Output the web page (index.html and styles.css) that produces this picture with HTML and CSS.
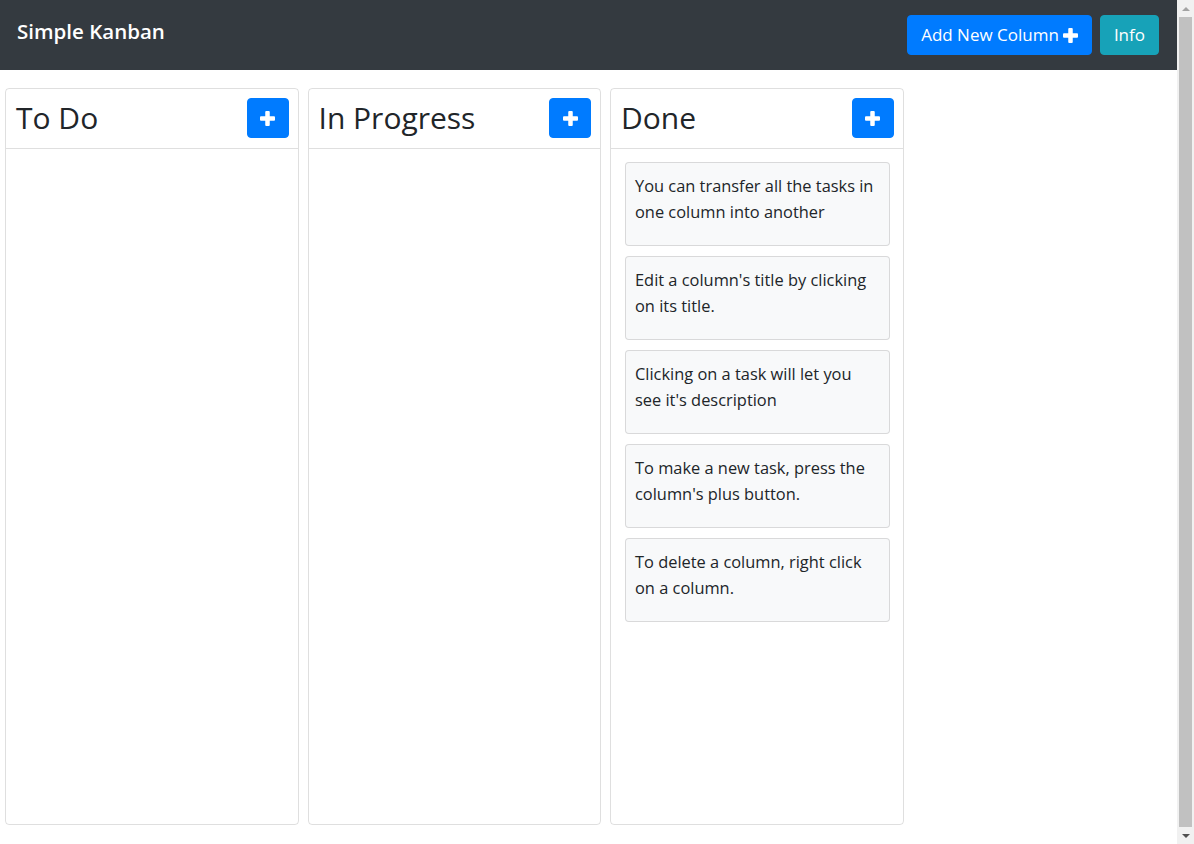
FILE: index.html
```html
<!DOCTYPE html>
<html lang="en">
<head>
<meta charset="utf-8">
<title>Simple Kanban</title>
<link rel="stylesheet" href="styles.css">
</head>
<body>
<div class="page">
  <nav class="navbar">
    <div class="brand">Simple Kanban</div>
    <div class="nav-actions">
      <button class="btn btn-primary btn-add-col">Add New Column <svg class="plus-icon" viewBox="0 0 15 15" width="15" height="15"><rect x="5.25" y="0" width="4.5" height="15" rx="1" fill="#fff"/><rect x="0" y="5.25" width="15" height="4.5" rx="1" fill="#fff"/></svg></button>
      <button class="btn btn-info">Info</button>
    </div>
  </nav>
  <main class="board">
    <section class="column">
      <header class="column-header">
        <h2 class="column-title">To Do</h2>
        <button class="btn btn-primary btn-plus"><svg viewBox="0 0 15 15" width="15" height="15"><rect x="5.25" y="0" width="4.5" height="15" rx="1" fill="#fff"/><rect x="0" y="5.25" width="15" height="4.5" rx="1" fill="#fff"/></svg></button>
      </header>
      <div class="column-body"></div>
    </section>
    <section class="column">
      <header class="column-header">
        <h2 class="column-title">In Progress</h2>
        <button class="btn btn-primary btn-plus"><svg viewBox="0 0 15 15" width="15" height="15"><rect x="5.25" y="0" width="4.5" height="15" rx="1" fill="#fff"/><rect x="0" y="5.25" width="15" height="4.5" rx="1" fill="#fff"/></svg></button>
      </header>
      <div class="column-body"></div>
    </section>
    <section class="column">
      <header class="column-header">
        <h2 class="column-title">Done</h2>
        <button class="btn btn-primary btn-plus"><svg viewBox="0 0 15 15" width="15" height="15"><rect x="5.25" y="0" width="4.5" height="15" rx="1" fill="#fff"/><rect x="0" y="5.25" width="15" height="4.5" rx="1" fill="#fff"/></svg></button>
      </header>
      <div class="column-body">
        <div class="task">You can transfer all the tasks in one column into another</div>
        <div class="task">Edit a column's title by clicking on its title.</div>
        <div class="task">Clicking on a task will let you see it's description</div>
        <div class="task">To make a new task, press the column's plus button.</div>
        <div class="task">To delete a column, right click on a column.</div>
      </div>
    </section>
  </main>
</div>
<div class="scrollbar" aria-hidden="true">
  <div class="scroll-arrow scroll-arrow-up"></div>
  <div class="scroll-thumb"></div>
  <div class="scroll-arrow scroll-arrow-down"></div>
</div>
</body>
</html>
```

FILE: styles.css
```css
* { box-sizing: border-box; }

html, body {
  margin: 0;
  padding: 0;
}

body {
  font-family: "Open Sans", "Noto Sans", sans-serif;
  font-size: 16.4px;
  line-height: 26.4px;
  color: #212529;
  background: #fff;
}

.page {
  margin-right: 17px;
}

.navbar {
  height: 70px;
  background: #343a40;
  display: flex;
  justify-content: space-between;
  align-items: flex-start;
  padding: 15px 18px 0 17px;
}

.brand {
  color: #fff;
  font-size: 20.5px;
  font-weight: 600;
  line-height: 28px;
  padding-top: 2px;
}

.nav-actions {
  display: flex;
  gap: 8px;
}

.btn {
  font-family: inherit;
  font-size: 17px;
  line-height: 26px;
  height: 40px;
  border: 1px solid transparent;
  border-radius: 4px;
  color: #fff;
  padding: 0 13px;
  display: flex;
  align-items: center;
  justify-content: center;
  cursor: pointer;
}

.btn-primary {
  background: #007bff;
  border-color: #007bff;
}

.btn-info {
  background: #17a2b8;
  border-color: #17a2b8;
}

.btn-add-col {
  gap: 4px;
}

.plus-icon {
  display: block;
}

.board {
  display: flex;
  gap: 9px;
  padding: 18px 0 23px 5px;
}

.column {
  width: 293.5px;
  height: 737px;
  border: 1px solid rgba(0, 0, 0, 0.125);
  border-radius: 4px;
  display: flex;
  flex-direction: column;
}

.column-header {
  display: flex;
  justify-content: space-between;
  align-items: center;
  padding: 9px 9px 10px 10px;
  border-bottom: 1px solid rgba(0, 0, 0, 0.125);
}

.column-title {
  margin: 0;
  font-size: 30px;
  font-weight: 500;
  line-height: 40px;
}

.btn-plus {
  width: 42px;
  padding: 0;
}

.btn-plus svg {
  display: block;
}

.column-body {
  flex: 1;
  padding: 13px 13px 13px 14px;
  display: flex;
  flex-direction: column;
  gap: 10px;
}

.task {
  background: #f8f9fa;
  border: 1px solid rgba(0, 0, 0, 0.125);
  border-radius: 4px;
  padding: 10px 9px 19px 9px;
  min-height: 84px;
}

.scrollbar {
  position: fixed;
  top: 0;
  right: 0;
  width: 17px;
  height: 100vh;
  background: #f1f1f1;
  display: flex;
  flex-direction: column;
  align-items: center;
}

.scroll-arrow {
  height: 17px;
  width: 17px;
  display: flex;
  align-items: center;
  justify-content: center;
}

.scroll-arrow::before {
  content: "";
  width: 0;
  height: 0;
  border-left: 4px solid transparent;
  border-right: 4px solid transparent;
}

.scroll-arrow-up::before {
  border-bottom: 4px solid #a3a3a3;
}

.scroll-arrow-down::before {
  border-top: 4px solid #505050;
}

.scroll-thumb {
  flex: 1;
  width: 13px;
  margin: 0 2px;
  background: #c1c1c1;
}
```
